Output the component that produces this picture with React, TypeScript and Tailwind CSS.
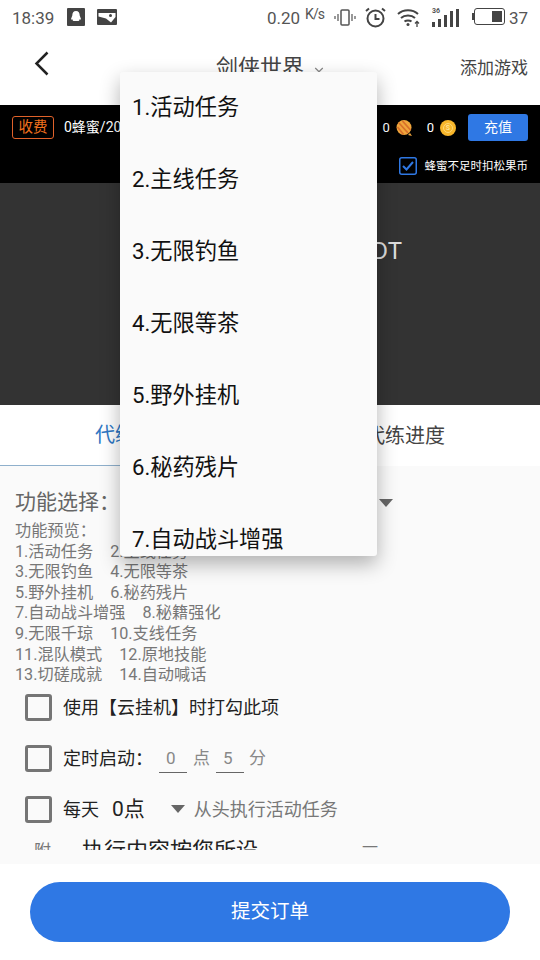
import React from 'react';
import { ChevronDown } from 'lucide-react';

const menuItems = ['1.活动任务', '2.主线任务', '3.无限钓鱼', '4.无限等茶', '5.野外挂机', '6.秘药残片', '7.自动战斗增强', '8.秘籍强化'];

const previewLines = [
  ['1.活动任务', '2.主线任务'],
  ['3.无限钓鱼', '4.无限等茶'],
  ['5.野外挂机', '6.秘药残片'],
  ['7.自动战斗增强', '8.秘籍强化'],
  ['9.无限千琼', '10.支线任务'],
  ['11.混队模式', '12.原地技能'],
  ['13.切磋成就', '14.自动喊话'],
];

function StatusBar() {
  return (
    <div className="h-[40px] flex items-start pt-[5px] px-[12px] text-[#555] text-[17px] leading-[26px] bg-white">
      <span>18:39</span>
      {/* QQ */}
      <svg className="ml-[13px] mt-[3px]" width="18" height="18" viewBox="0 0 18 18">
        <rect width="18" height="18" rx="1" fill="#444" />
        <path d="M9 3c2.600 0 3.700 2 3.700 4.400l1.300 3.600c0 .8-.7.6-1.200-.1-.2 1-.6 1.600-1.200 2H6.400c-.6-.4-1-1-1.200-2-.5.700-1.200.9-1.200.1l1.300-3.600C5.300 5 6.400 3 9 3z" fill="#fff" />
      </svg>
      {/* picture message */}
      <svg className="ml-[12px] mt-[4px]" width="20" height="16" viewBox="0 0 20 16">
        <rect width="20" height="16" rx="1" fill="#444" />
        <path d="M1.500 4h17v4l-4.500 5.500L9 9.500 1.500 7.500z" fill="#fff" />
        <circle cx="13.500" cy="6.500" r="1.500" fill="#444" />
      </svg>
      <div className="ml-auto flex items-start">
        <span>0.20</span>
        <span className="ml-[5px] text-[14px] leading-[18px] tracking-[-1px]">K/s</span>
        {/* vibrate */}
        <svg className="ml-[10px] mt-[4px]" width="22" height="18" viewBox="0 0 22 18" fill="none" stroke="#555">
          <rect x="7" y="1" width="8" height="15" rx="1" strokeWidth="1.500" />
          <path d="M4 5v7M1 7v3M18 5v7M21 7v3" strokeWidth="1.200" />
        </svg>
        {/* alarm */}
        <svg className="ml-[9px] mt-[2px]" width="21" height="21" viewBox="0 0 21 21" fill="none" stroke="#444" strokeWidth="2">
          <circle cx="10.500" cy="11.500" r="8" />
          <path d="M10.500 7v5h4M1 4l3-2.500M20 4l-3-2.500" />
        </svg>
        {/* wifi */}
        <svg className="ml-[11px] mt-[3px]" width="23" height="19" viewBox="0 0 23 19" fill="none" stroke="#444" strokeWidth="2">
          <path d="M1 6c5.500-5 14.500-5 20 0M4 10c3.500-3.200 10.500-3.200 14 0M7.500 13.500c1.800-1.500 5.200-1.500 7 0" />
          <circle cx="11" cy="16.500" r="1.500" fill="#444" stroke="none" />
          <path d="M20 19v-5M18 15.500l2-2 2 2" strokeWidth="1.300" />
        </svg>
        {/* signal */}
        <div className="ml-[12px] mt-[2px] relative w-[27px] h-[20px] flex items-end gap-[3px]">
          <span className="absolute left-0 top-0 text-[7px] leading-[8px] font-bold">36</span>
          <span className="w-[3px] h-[5px] bg-[#444]" />
          <span className="w-[3px] h-[8px] bg-[#444]" />
          <span className="w-[3px] h-[12px] bg-[#444]" />
          <span className="w-[3px] h-[16px] bg-[#444]" />
          <span className="w-[3px] h-[18px] bg-[#444]" />
        </div>
        {/* battery */}
        <div className="ml-[13px] mt-[3px] flex items-center">
          <span className="w-[2px] h-[7px] bg-[#444]" />
          <span className="w-[31px] h-[17px] border-[1.500px] border-[#444] rounded-[3px] flex justify-end items-center pr-[1.500px]">
            <span className="w-[10px] h-[11px] bg-[#444]" />
          </span>
        </div>
        <span className="ml-[4px]">37</span>
      </div>
    </div>
  );
}

function FruitIcon() {
  return (
    <svg width="18" height="18" viewBox="0 0 18 18">
      <circle cx="8" cy="8.500" r="7.500" fill="#f0a63c" />
      <path d="M3 4l9 10M6.500 2l8 9M1.500 8l6 7.500" stroke="#d8702a" strokeWidth="1.800" />
      <path d="M14 14l2 3-4-1z" fill="#f0a63c" />
    </svg>
  );
}

function CoinIcon() {
  return (
    <div className="w-[16px] h-[16px] rounded-full bg-[#f8b62a] flex items-center justify-center">
      <span className="w-[10px] h-[10px] rounded-full border border-[#fdd878] text-[7px] leading-[8px] text-center font-bold text-[#fde29a]">
        S
      </span>
    </div>
  );
}

function Checkbox() {
  return <div className="w-[27px] h-[27px] shrink-0 border-[3px] border-[#757575] rounded-[3px]" />;
}

function App() {
  return (
    <div className="relative w-[540px] h-[960px] overflow-hidden bg-white flex flex-col font-['Roboto','Noto_Sans_CJK_SC',sans-serif]">
      <StatusBar />

      {/* Header */}
      <div className="h-[65px] relative flex items-start justify-end pr-[12px] pt-[15px]">
        <svg className="absolute left-[34px] top-[11px]" width="15" height="25" viewBox="0 0 15 25" fill="none" stroke="#222" strokeWidth="2.500">
          <path d="M13.500 1.500L2.500 12.500l11 11" />
        </svg>
        <div className="absolute left-[216px] top-[14px] flex items-center text-[22px] leading-[28px] text-[#444]">
          剑侠世界
          <ChevronDown className="ml-[8px] mt-[4px]" size={14} color="#888" />
        </div>
        <span className="text-[17px] leading-[26px] text-[#444]">添加游戏</span>
      </div>

      {/* Fee bar */}
      <div className="h-[78px] bg-black pl-[12px] pr-[12px] pt-[9px]">
        <div className="flex items-center h-[27px]">
          <span className="w-[42px] h-[23px] border border-[#e0622a] rounded-[3px] text-[#f0701e] text-[14.500px] leading-[21px] text-center">
            收费
          </span>
          <span className="ml-[10px] text-[14px] text-white">0蜂蜜/20分钟</span>
          <div className="ml-auto flex items-center text-[13px] text-white">
            <span className="mr-[6px]">0</span>
            <FruitIcon />
            <span className="ml-[13px] mr-[6px]">0</span>
            <CoinIcon />
            <button className="ml-[12px] w-[60px] h-[27px] bg-[#2f78e4] rounded-[3px] text-[14px]">充值</button>
          </div>
        </div>
        <div className="flex items-center justify-end mt-[16px]">
          <svg width="18" height="18" viewBox="0 0 18 18" fill="none">
            <rect x="0.750" y="0.750" width="16.500" height="16.500" rx="2" stroke="#2f78e4" strokeWidth="1.500" />
            <path d="M4 9l3.500 3.500L14 5" stroke="#2f78e4" strokeWidth="2" />
          </svg>
          <span className="ml-[8px] text-[11.500px] leading-[18px] text-white">蜂蜜不足时扣松果币</span>
        </div>
      </div>

      {/* Banner */}
      <div className="h-[222px] bg-[#333] flex justify-end pr-[138px] pt-[52px]">
        <span className="text-[24px] leading-[32px] text-[#ddd]">DT</span>
      </div>

      {/* Tabs */}
      <div className="h-[61px] flex text-[20px]">
        <div className="flex-1 flex items-center justify-center text-[#2f78c4] border-b-[1.500px] border-[#8fb0cc]">代练设置</div>
        <div className="flex-1 flex items-center justify-center text-[#444]">代练进度</div>
      </div>

      {/* Form */}
      <div className="h-[398px] bg-[#fafafa] pb-[14px]">
        <div className="h-full overflow-hidden">
          <div className="flex items-center h-[30px] mt-[22px] pl-[15px] pr-[147px] text-[21px] text-[#666]">
            功能选择：
            <span className="ml-auto w-0 h-0 border-x-[7px] border-x-transparent border-t-[8px] border-t-[#666]" />
          </div>
          <div className="pl-[15px] mt-[3px] text-[16.200px] leading-[20.600px] text-[#777]">
            <div>功能预览：</div>
            {previewLines.map((line) => (
              <div key={line[0]} className="flex gap-[17px]">
                <span>{line[0]}</span>
                <span>{line[1]}</span>
              </div>
            ))}
          </div>
          <div className="pl-[25px] mt-[8px] text-[18px] text-[#222] flex flex-col gap-[24px]">
            <div className="flex items-center gap-[11px]">
              <Checkbox />
              使用【云挂机】时打勾此项
            </div>
            <div className="flex items-center gap-[11px]">
              <Checkbox />
              定时启动：
              <div className="-ml-[5px] flex items-center text-[#888] text-[17px]">
                <span className="w-[28px] h-[28px] border-b border-[#666] pl-[7px] leading-[26px]">0</span>
                <span className="w-[29px] text-center">点</span>
                <span className="w-[28px] h-[28px] border-b border-[#666] pl-[7px] leading-[26px]">5</span>
                <span className="ml-[5px]">分</span>
              </div>
            </div>
            <div className="flex items-center gap-[11px] -mt-[1px]">
              <Checkbox />
              每天
              <span className="ml-[2px] text-[21px] leading-[27px]">0点</span>
              <span className="ml-[15px] w-0 h-0 border-x-[7px] border-x-transparent border-t-[8px] border-t-[#666]" />
              <span className="-ml-[2px] text-[#777]">从头执行活动任务</span>
            </div>
            <div className="flex items-start text-[22px] leading-[28px] -mt-[10px]">
              <span className="ml-[9px] text-[17px] text-[#777]">附</span>
              <span className="ml-[31px]">执行内容按您所设</span>
              <span className="ml-[104px] text-[#777] text-[16px] leading-[22px]">一</span>
            </div>
          </div>
        </div>
      </div>

      {/* Submit */}
      <div className="flex-1 px-[30px] pt-[18px]">
        <button className="w-full h-[60px] rounded-full bg-[#2f78e4] text-white text-[19.500px]">提交订单</button>
      </div>

      {/* Dropdown menu */}
      <div className="absolute left-[120px] top-[72px] w-[257px] h-[484px] overflow-hidden bg-[#fafafa] rounded-[3px] shadow-[0_8px_20px_rgba(0,0,0,0.3)]">
        {menuItems.map((item) => (
          <div key={item} className="h-[72px] pl-[12px] flex items-center text-[22.200px] text-[#111]">
            {item}
          </div>
        ))}
      </div>
    </div>
  );
}

export default App;
